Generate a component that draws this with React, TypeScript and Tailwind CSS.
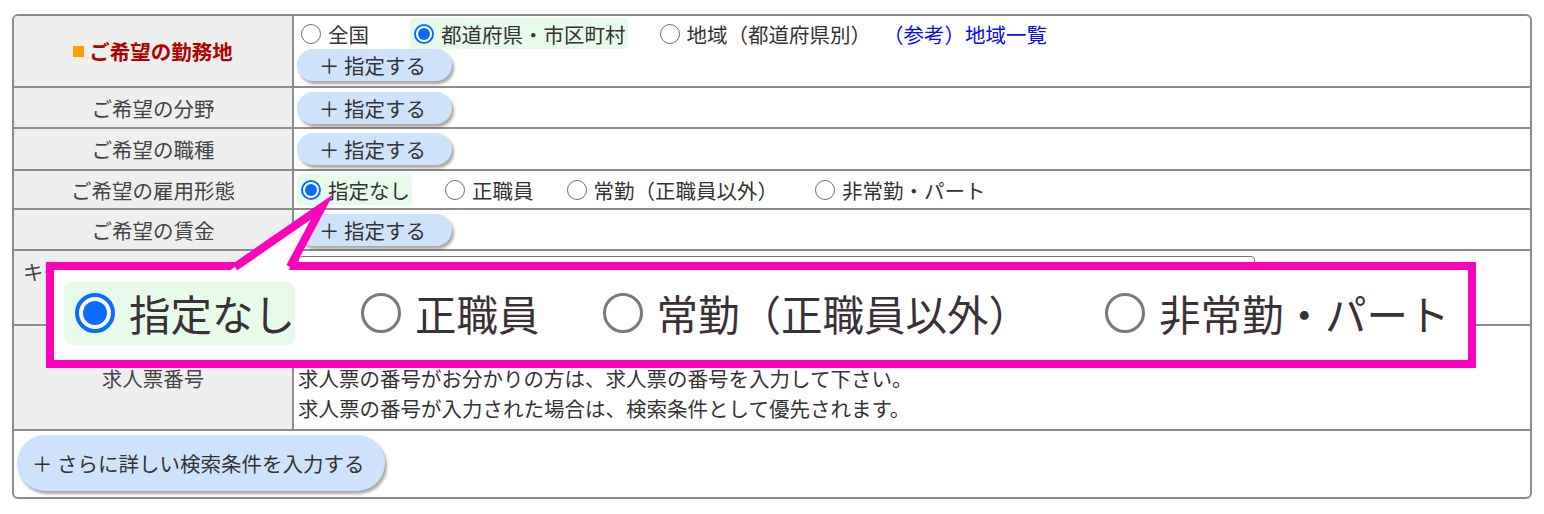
import React from "react";

const FONT = "font-['Noto_Sans_CJK_JP','Noto_Sans',sans-serif]";

function Radio({ checked, big }: { checked?: boolean; big?: boolean }) {
  if (big) {
    return checked ? (
      <span className="flex h-[40px] w-[40px] shrink-0 items-center justify-center rounded-full border-[4px] border-[#0a6cff] bg-white">
        <span className="h-[24px] w-[24px] rounded-full bg-[#0a6cff]" />
      </span>
    ) : (
      <span className="h-[40px] w-[40px] shrink-0 rounded-full border-[3px] border-[#7a7a7a] bg-white" />
    );
  }
  return checked ? (
    <span className="flex h-[20px] w-[20px] shrink-0 items-center justify-center rounded-full border-[2px] border-[#0a6cff] bg-white">
      <span className="h-[12px] w-[12px] rounded-full bg-[#0a6cff]" />
    </span>
  ) : (
    <span className="h-[20px] w-[20px] shrink-0 rounded-full border-[1.5px] border-[#6e6e6e] bg-white" />
  );
}

function Choice({
  label,
  checked,
  className = "",
}: {
  label: string;
  checked?: boolean;
  className?: string;
}) {
  return (
    <span
      className={
        "inline-flex h-[31px] items-center gap-[7px] rounded-[4px] pl-[4px] " +
        (checked ? "bg-[#e8fbea] " : "") +
        className
      }
    >
      <Radio checked={checked} />
      <span>{label}</span>
    </span>
  );
}

function BigChoice({
  label,
  checked,
  className = "",
}: {
  label: string;
  checked?: boolean;
  className?: string;
}) {
  return (
    <span
      className={
        "inline-flex h-[63px] items-center gap-[14px] rounded-[8px] pl-[11px] " +
        (checked ? "bg-[#e8fbea] " : "") +
        className
      }
    >
      <Radio big checked={checked} />
      <span>{label}</span>
    </span>
  );
}

function AddButton() {
  return (
    <button
      type="button"
      className="flex h-[32px] w-[155px] items-center rounded-full bg-[#cfe2fb] pl-[22px] text-[#333] shadow-[2px_3px_3px_rgba(0,0,0,0.35)]"
    >
      ＋ 指定する
    </button>
  );
}

function Label({ children }: { children: React.ReactNode }) {
  return (
    <div className="flex w-[280px] shrink-0 items-center justify-center border-r-2 border-[#8c8c8c] bg-[#efefef] text-[#444]">
      {children}
    </div>
  );
}

export default function App() {
  return (
    <div className={"relative h-[514px] w-[1544px] bg-white text-[20.5px] leading-[30px] text-[#333] " + FONT}>
      <div className="absolute left-[12px] top-[14px] w-[1520px] overflow-hidden rounded-[6px] border-2 border-[#8c8c8c]">
        {/* 勤務地 */}
        <div className="flex h-[72px] border-b-2 border-[#8c8c8c]">
          <Label>
            <span className="mr-[5px] h-[11px] w-[11px] bg-[#ffa000]" />
            <span className="font-bold text-[#b50000]">ご希望の勤務地</span>
          </Label>
          <div className="flex flex-col pl-[3px] pt-[2px]">
            <div className="flex items-center">
              <Choice label="全国" />
              <Choice label="都道府県・市区町村" checked className="ml-[41px] pr-[2px]" />
              <Choice label="地域（都道府県別）" className="ml-[28px]" />
              <a className="ml-[12px] text-[#0b0bef]">（参考）地域一覧</a>
            </div>
            <AddButton />
          </div>
        </div>

        <div className="flex h-[41px] border-b-2 border-[#8c8c8c]">
          <Label>ご希望の分野</Label>
          <div className="flex items-center pl-[3px]">
            <AddButton />
          </div>
        </div>

        <div className="flex h-[42px] border-b-2 border-[#8c8c8c]">
          <Label>ご希望の職種</Label>
          <div className="flex items-center pl-[3px]">
            <AddButton />
          </div>
        </div>

        <div className="flex h-[39px] border-b-2 border-[#8c8c8c]">
          <Label>ご希望の雇用形態</Label>
          <div className="flex items-center pl-[3px]">
            <Choice label="指定なし" checked className="pr-[2px]" />
            <Choice label="正職員" className="ml-[29px]" />
            <Choice label="常勤（正職員以外）" className="ml-[29px]" />
            <Choice label="非常勤・パート" className="ml-[33px]" />
          </div>
        </div>

        <div className="flex h-[41px] border-b-2 border-[#8c8c8c]">
          <Label>ご希望の賃金</Label>
          <div className="flex items-center pl-[3px]">
            <AddButton />
          </div>
        </div>

        {/* キーワード */}
        <div className="flex h-[75px] border-b-2 border-[#8c8c8c]">
          <div className="w-[280px] shrink-0 whitespace-nowrap border-r-2 border-[#8c8c8c] bg-[#efefef] pl-[9px] pt-[5px] text-[#444]">
            キーワード（複数入力可）
          </div>
          <div className="flex flex-col pl-[4px] pt-[5px]">
            <div className="h-[31px] w-[957px] rounded-[4px] border border-[#767676] bg-white" />
          </div>
        </div>

        {/* 求人票番号 */}
        <div className="flex h-[105px] border-b-2 border-[#8c8c8c]">
          <Label>求人票番号</Label>
          <div className="flex flex-col pl-[4px] pt-[6px]">
            <div className="mb-[1px] h-[30px] w-[300px] rounded-[4px] border border-[#767676] bg-white" />
            <div>求人票の番号がお分かりの方は、求人票の番号を入力して下さい。</div>
            <div>求人票の番号が入力された場合は、検索条件として優先されます。</div>
          </div>
        </div>

        <div className="flex h-[66px] items-start pl-[3px] pt-[4px]">
          <button
            type="button"
            className="flex h-[56px] items-center rounded-full bg-[#cfe2fb] pl-[15px] pr-[20px] text-[#333] shadow-[2px_3px_3px_rgba(0,0,0,0.35)]"
          >
            ＋ さらに詳しい検索条件を入力する
          </button>
        </div>
      </div>

      {/* 拡大吹き出し */}
      <div className="absolute left-[46px] top-[262px] flex h-[106px] w-[1430px] items-center border-[8px] border-[#ff00bb] bg-white pb-[4px] pl-[10px] text-[41.5px] leading-[50px] text-[#3a3136]">
        <BigChoice label="指定なし" checked />
        <BigChoice label="正職員" className="ml-[55px]" />
        <BigChoice label="常勤（正職員以外）" className="ml-[52px]" />
        <BigChoice label="非常勤・パート" className="ml-[64px]" />
      </div>
      <svg className="pointer-events-none absolute left-0 top-0" width="1544" height="514">
        <polygon points="229,271 322,207 288,271" fill="#ffffff" />
        <polyline
          points="235,267 322,207 290,267"
          fill="none"
          stroke="#ff00bb"
          strokeWidth="8"
          strokeLinejoin="miter"
          strokeMiterlimit="10"
        />
      </svg>
    </div>
  );
}
